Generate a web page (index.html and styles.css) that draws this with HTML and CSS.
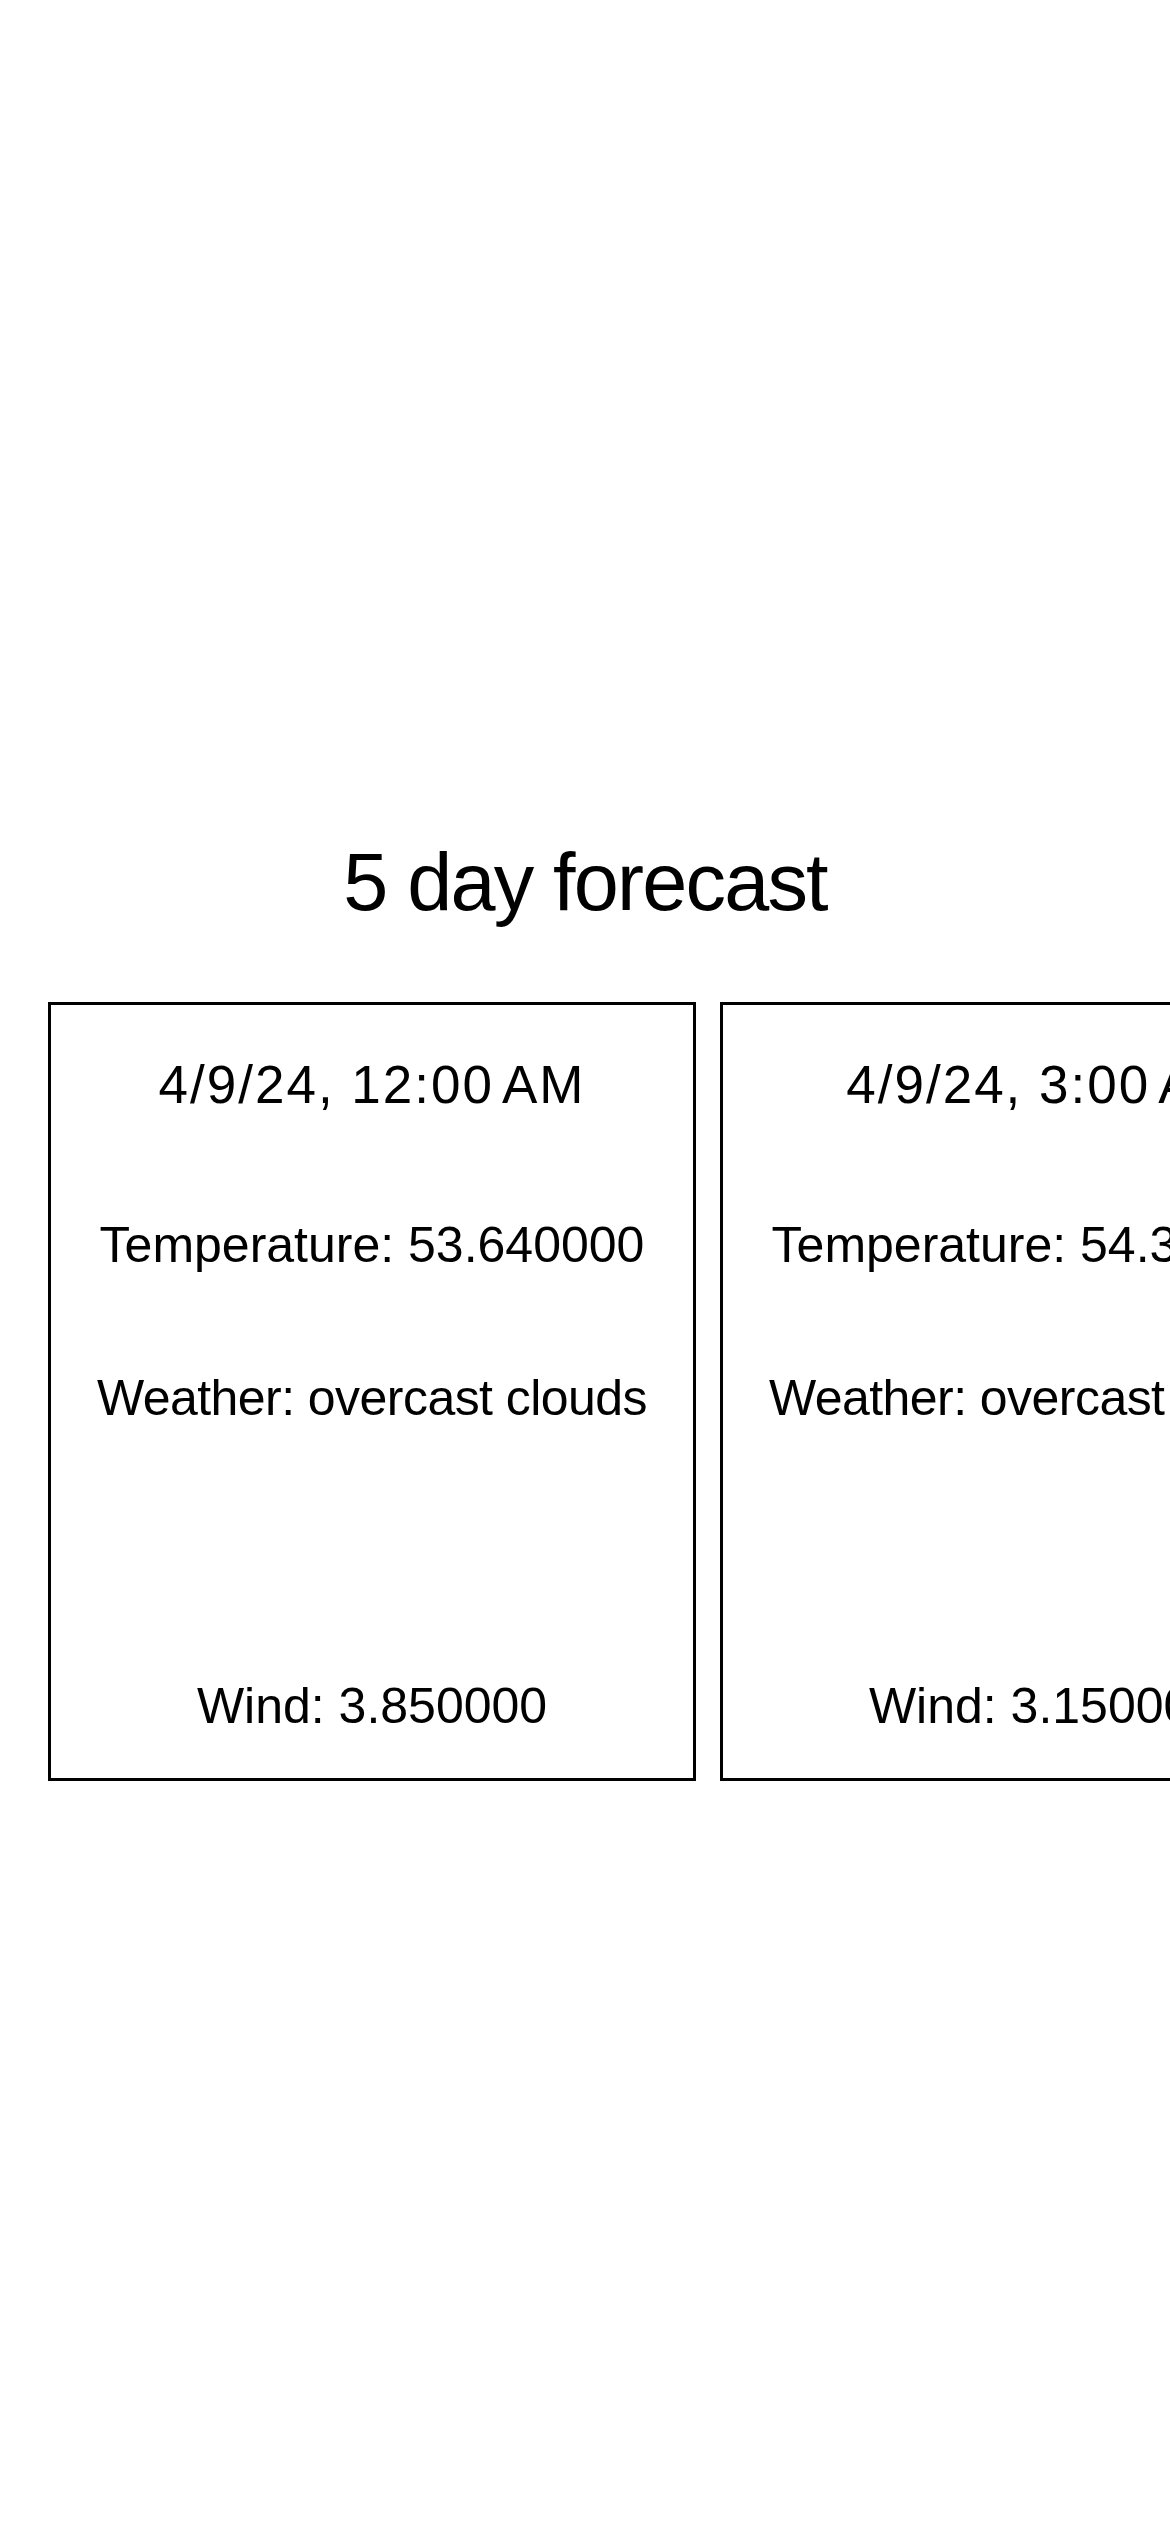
FILE: index.html
```html
<!DOCTYPE html>
<html lang="en">
<head>
<meta charset="utf-8">
<title>5 day forecast</title>
<link rel="stylesheet" href="styles.css">
</head>
<body>
<main class="page">
  <h1 class="title">5 day forecast</h1>
  <div class="cards">
    <div class="card">
      <div class="date">4/9/24, 12:00<span class="nsp"></span>AM</div>
      <p class="line">Temperature: 53.640000</p>
      <p class="line weather">Weather: overcast clouds</p>
      <div class="icon"></div>
      <p class="line">Wind: 3.850000</p>
    </div>
    <div class="card">
      <div class="date">4/9/24, 3:00<span class="nsp"></span>AM</div>
      <p class="line">Temperature: 54.390000</p>
      <p class="line weather">Weather: overcast clouds</p>
      <div class="icon"></div>
      <p class="line">Wind: 3.150000</p>
    </div>
    <div class="card">
      <div class="date">4/9/24, 6:00<span class="nsp"></span>AM</div>
      <p class="line">Temperature: 55.120000</p>
      <p class="line weather">Weather: overcast clouds</p>
      <div class="icon"></div>
      <p class="line">Wind: 3.410000</p>
    </div>
  </div>
</main>
</body>
</html>
```

FILE: styles.css
```css
html, body {
  margin: 0;
  padding: 0;
  background: #ffffff;
}

body {
  font-family: "Liberation Sans", Arial, sans-serif;
  color: #000000;
  width: 1170px;
  overflow: hidden;
}

.page {
  padding-top: 832px;
  min-height: 2532px;
  box-sizing: border-box;
}

.title {
  margin: 0 0 70px;
  font-size: 81px;
  line-height: 100px;
  font-weight: 400;
  letter-spacing: -1.8px;
  text-align: center;
}

.cards {
  display: flex;
  gap: 24px;
  padding-left: 48px;
  overflow: hidden;
}

.card {
  flex: 0 0 648px;
  box-sizing: border-box;
  border: 3px solid #000000;
  padding: 50px 0 42px;
  display: flex;
  flex-direction: column;
  gap: 93px;
  text-align: center;
}

.date {
  font-size: 53px;
  line-height: 60px;
  letter-spacing: 2px;
  margin-bottom: 7px;
}

.nsp {
  display: inline-block;
  width: 8px;
}

.line {
  margin: 0;
  font-size: 50px;
  line-height: 60px;
}

.weather {
  letter-spacing: -0.55px;
}

.icon {
  height: 62px;
}
```
